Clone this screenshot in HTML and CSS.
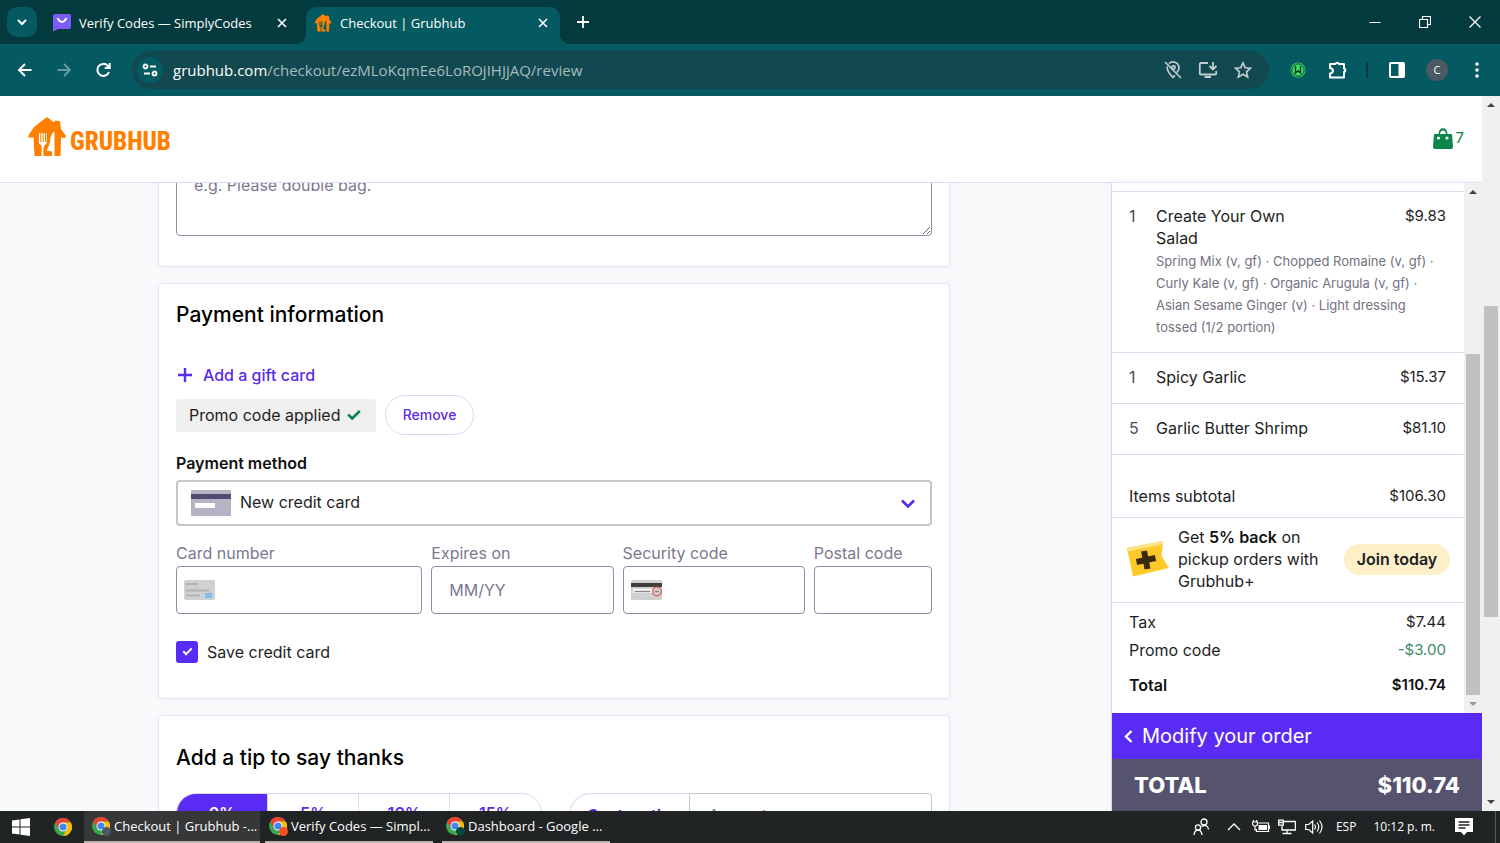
FILE: index.html
```
<!DOCTYPE html>
<html lang="en">
<head>
<meta charset="utf-8">
<title>Checkout | Grubhub</title>
<link rel="stylesheet" href="styles.css">
</head>
<body>
<svg class="defs" aria-hidden="true">
  <symbol id="house" viewBox="0 0 38 40">
    <path fill="#ff8000" d="M19 0 26 5.500 27 3.500 32 4 33 12 38 19 37 21 33 20.500 32.500 39H6.500L5.500 20.500 0 20.500 1 17.500 6 10Z"/>
    <path class="cutout" d="M11 16h1.300v9h1V16h1.400v9h1V16h1.300v9h1v-9h.6v10.500L16 29l-.8 5 .5 6h-2.200l.2-11L11 26.500ZM26.500 14v25.500h-2.500V34.500L18.500 33.500Q22 28 22.500 21 23 17 26.500 14Z"/>
  </symbol>
  <symbol id="chrome" viewBox="0 0 18 18">
    <circle cx="9" cy="9" r="9" fill="#34a853"/>
    <path fill="#ea4335" d="M1.200 4.500A9 9 0 0 1 16.800 4.500H9A4.500 4.500 0 0 0 5 7Z"/>
    <path fill="#ea4335" d="M1.200 4.500 5.100 11.200 9 9 9 4.500Z"/>
    <path fill="#fbbc04" d="M16.800 4.500A9 9 0 0 1 9 18L12.900 11.200 9 9V4.500Z"/>
    <circle cx="9" cy="9" r="4.500" fill="#fff"/><circle cx="9" cy="9" r="3.600" fill="#4285f4"/>
  </symbol>
  <symbol id="cross" viewBox="0 0 10 10"><path d="m1 1 8 8M9 1 1 9" fill="none" stroke="#fff" stroke-width="1.600"/></symbol>
</svg>

<header class="tabs">
  <button class="tab-search" aria-label="Search tabs"><svg width="10" height="7" viewBox="0 0 10 7"><path d="m1 1 4 4 4-4" fill="none" stroke="#fff" stroke-width="2"/></svg></button>
  <div class="tab">
    <svg width="18" height="18" viewBox="0 0 18 18"><path fill="#7c5cf5" d="M2 0h14a2 2 0 0 1 2 2v11a2 2 0 0 1-2 2H5l-5 2.500V2A2 2 0 0 1 2 0Z"/><path d="M5 5q4 6 8 0" fill="none" stroke="#fff" stroke-width="2.200" stroke-linecap="round"/></svg>
    <span class="tab-title">Verify Codes — SimplyCodes</span>
    <button class="tab-close" aria-label="Close tab"><svg width="10" height="10"><use href="#cross"/></svg></button>
  </div>
  <div class="tab active">
    <svg width="18" height="18"><use href="#house"/></svg>
    <span class="tab-title">Checkout | Grubhub</span>
    <button class="tab-close" aria-label="Close tab"><svg width="10" height="10"><use href="#cross"/></svg></button>
  </div>
  <button class="new-tab" aria-label="New tab"><svg width="12" height="12" viewBox="0 0 12 12"><path d="M6 0v12M0 6h12" stroke="#fff" stroke-width="1.800"/></svg></button>
  <div class="window-buttons">
    <button aria-label="Minimize"><svg width="12" height="12" viewBox="0 0 12 12"><path d="M.5 6.500h11" stroke="#fff"/></svg></button>
    <button aria-label="Restore"><svg width="12" height="12" viewBox="0 0 12 12"><path d="M.5 3.500h8v8h-8zM3.500 3V.5h8v8H9" fill="none" stroke="#fff" stroke-width="1.200"/></svg></button>
    <button aria-label="Close"><svg width="12" height="12" viewBox="0 0 12 12"><path d="m.5.5 11 11m0-11-11 11" stroke="#fff" stroke-width="1.200"/></svg></button>
  </div>
</header>

<nav class="toolbar">
  <button aria-label="Back"><svg width="20" height="20" viewBox="0 0 20 20"><path d="M16.500 10H4.500m5.500-6-6 6 6 6" fill="none" stroke="#fff" stroke-width="2"/></svg></button>
  <button aria-label="Forward"><svg width="20" height="20" viewBox="0 0 20 20"><path d="M3.500 10h12M10 4l6 6-6 6" fill="none" stroke="#6a9ea2" stroke-width="1.800"/></svg></button>
  <button aria-label="Reload"><svg width="20" height="20" viewBox="0 0 20 20"><path d="M16 12a6 6 0 1 1-1.300-6.300L16.500 7.500M16.700 3v5h-5" fill="none" stroke="#fff" stroke-width="2"/></svg></button>
  <div class="omnibox">
    <button class="site-info" aria-label="Site information"><svg width="16" height="14" viewBox="0 0 16 14"><g fill="none" stroke="#fff" stroke-width="1.800"><circle cx="3.500" cy="3.500" r="2"/><path d="M8 3.500h6M2 10.500h6"/><circle cx="12.500" cy="10.500" r="2"/></g></svg></button>
    <p class="url"><span>grubhub.com</span>/checkout/ezMLoKqmEe6LoROjIHJjAQ/review</p>
    <div class="omni-actions">
      <button aria-label="Location blocked"><svg width="18" height="20" viewBox="0 0 18 20"><g fill="none" stroke="#c3cdd0" stroke-width="1.700"><path d="M5 3.500A6 6 0 0 1 15 8q0 2-2 4.500M3.300 6.500C2.500 10.500 6 14.500 9 17.500l2-2.200M1 2l16 16"/><circle cx="9.500" cy="7.500" r="1.600"/></g></svg></button>
      <button aria-label="Install app"><svg width="20" height="18" viewBox="0 0 20 18"><path d="M10 2H2.800a1 1 0 0 0-1 1v9.500a1 1 0 0 0 1 1h14.400a1 1 0 0 0 1-1V10M6.500 16h6.500M15 1v7M11.500 5 15 8.500 18.500 5" fill="none" stroke="#c3cdd0" stroke-width="1.800"/></svg></button>
      <button aria-label="Bookmark"><svg width="18" height="18" viewBox="0 0 18 18"><path d="m9 1.800 2.200 4.900 5.300.5-4 3.600 1.200 5.200L9 13.200 4.300 16l1.200-5.200-4-3.600 5.300-.5Z" fill="none" stroke="#c3cdd0" stroke-width="1.600"/></svg></button>
    </div>
  </div>
  <button aria-label="Coupon extension"><svg width="16" height="16" viewBox="0 0 16 16"><circle cx="8" cy="8" r="7.500" fill="#3ee06d"/><circle cx="8" cy="8" r="6.200" fill="none" stroke="#08331d"/><path d="M5.500 4v7L8 9l2.500 2V4" fill="none" stroke="#08331d" stroke-width="1.400"/></svg></button>
  <button aria-label="Extensions"><svg width="20" height="20" viewBox="0 0 20 20"><path d="M4 4h4.500a1.800 1.800 0 0 1 3.400 0H17v4.500a1.800 1.800 0 0 1 0 3.500V17.500H3V13.500q3-.5 3-2.700T3 8V4Z" fill="none" stroke="#fff" stroke-width="2" stroke-linejoin="round"/></svg></button>
  <span class="toolbar-rule"></span>
  <button aria-label="Side panel"><svg width="16" height="16" viewBox="0 0 16 16"><rect x="1" y="1" width="14" height="14" rx="1" fill="none" stroke="#fff" stroke-width="2"/><path fill="#fff" d="M9.500 1H15v14H9.500z"/></svg></button>
  <button class="avatar" aria-label="Profile">C</button>
  <button aria-label="Menu"><svg width="4" height="16" viewBox="0 0 4 16"><g fill="#fff"><circle cx="2" cy="2" r="1.800"/><circle cx="2" cy="8" r="1.800"/><circle cx="2" cy="14" r="1.800"/></g></svg></button>
</nav>

<div class="viewport">
  <div class="site">
    <header class="site-header">
      <a class="logo" href="#" aria-label="Grubhub home"><svg width="38" height="40"><use href="#house"/></svg><span>GRUBHUB</span></a>
      <button class="bag"><svg width="20" height="21" viewBox="0 0 20 21"><path fill="#0c8549" d="M2 6h3.500Q6 .3 10 .3T14.500 6H18q1 0 1.100 1L20 19q0 2-2 2H2q-2 0-2-2L.9 7Q1 6 2 6Zm5 0h6q-.3-3.500-3-3.500T7 6Z"/><circle cx="5.500" cy="10" r="1.600" fill="#fff"/><circle cx="14" cy="10" r="1.600" fill="#fff"/></svg>7</button>
    </header>
    <div class="site-body">
      <main class="content">
        <section class="card note-card">
          <textarea class="note" aria-label="Order instructions" placeholder="e.g. Please double bag."></textarea>
        </section>

        <section class="card payment">
          <h2>Payment information</h2>
          <button class="gift"><svg width="14" height="14" viewBox="0 0 14 14"><path d="M7 0v14M0 7h14" stroke="#5a2be8" stroke-width="2.400"/></svg>Add a gift card</button>
          <div class="promo">
            <span class="promo-tag">Promo code applied <svg width="14" height="10" viewBox="0 0 14 10"><path d="m1.200 4.500 4 4L12.800 1" fill="none" stroke="#0c8549" stroke-width="2.600"/></svg></span>
            <button class="remove">Remove</button>
          </div>
          <label class="method-label" for="method">Payment method</label>
          <div class="method">
            <select id="method"><option>New credit card</option></select>
            <svg class="method-card" width="40" height="26" viewBox="0 0 40 26"><rect width="40" height="26" rx="1" fill="#b6b4c4"/><path fill="#524a70" d="M0 4h40v5H0z"/><path fill="#fff" d="M4 13h20v5H4z"/></svg>
            <svg class="method-arrow" width="14" height="9" viewBox="0 0 14 9"><path d="m1 1.500 6 6 6-6" fill="none" stroke="#5a2be8" stroke-width="2.600"/></svg>
          </div>
          <div class="fields">
            <div class="field"><label for="number">Card number</label><div class="box"><svg width="31" height="20" viewBox="0 0 31 20"><rect width="31" height="20" rx="2" fill="#d0d0d0"/><path d="M2 4h12M2 10.500h23M2 15.500h14" stroke="#b2b2b2" stroke-width="2"/><path fill="#82bdee" d="M21 13h7v5h-7z"/></svg><input id="number" type="text"></div></div>
            <div class="field"><label for="expires">Expires on</label><div class="box"><input id="expires" type="text" placeholder="MM/YY"></div></div>
            <div class="field"><label for="security">Security code</label><div class="box"><svg width="31" height="20" viewBox="0 0 31 20"><rect width="31" height="20" rx="1.500" fill="#d0d0d0"/><path fill="#3e3e3e" d="M0 3h31v4H0z"/><path fill="#fff" d="M2 9h19v4H2z"/><path d="M3.500 11.500h16M24 11.500h4" stroke="#8a8a8a" stroke-width="1.500"/><circle cx="26" cy="11.500" r="4.300" fill="none" stroke="#e25a55" stroke-width="1.300"/></svg><input id="security" type="text"></div></div>
            <div class="field"><label for="postal">Postal code</label><div class="box"><input id="postal" type="text"></div></div>
          </div>
          <label class="save"><input type="checkbox" checked>Save credit card</label>
        </section>

        <section class="card tip">
          <h2>Add a tip to say thanks</h2>
          <div class="tip-row">
            <div class="tip-group"><button class="selected">0%</button><button>5%</button><button>10%</button><button>15%</button></div>
            <div class="custom"><button>Custom tip</button><input type="text" aria-label="Tip amount" placeholder="Amount"></div>
          </div>
        </section>
      </main>

      <aside class="order">
        <div class="order-scroll">
          <div class="order-list">
            <div class="item first"><span class="qty">1</span><p>Create Your Own Salad</p><span class="price">$9.83</span><p class="options">Spring Mix (v, gf) · Chopped Romaine (v, gf) · Curly Kale (v, gf) · Organic Arugula (v, gf) · Asian Sesame Ginger (v) · Light dressing tossed (1/2 portion)</p></div>
            <div class="item"><span class="qty">1</span><p>Spicy Garlic</p><span class="price">$15.37</span></div>
            <div class="item"><span class="qty">5</span><p>Garlic Butter Shrimp</p><span class="price">$81.10</span></div>
            <div class="line subtotal"><span>Items subtotal</span><span class="price">$106.30</span></div>
            <div class="plus">
              <svg width="42" height="36" viewBox="0 0 42 36"><path fill="#ffca28" d="M0 7 36 0l-1.500 15L42 27 6 35.500Z"/><path d="m1 9 35-7.500" stroke="#ffe58a" stroke-width="3"/><path d="m17 10 3.500 18M9.500 21l19-4" stroke="#3b2a0b" stroke-width="6"/></svg>
              <p>Get <b>5% back</b> on pickup orders with Grubhub+</p>
              <button>Join today</button>
            </div>
            <div class="totals">
              <div class="line"><span>Tax</span><span class="price">$7.44</span></div>
              <div class="line"><span>Promo code</span><span class="price discount">-$3.00</span></div>
              <div class="line grand"><span>Total</span><span class="price">$110.74</span></div>
            </div>
          </div>
          <div class="track inner-track"><span class="arrow up"></span><span class="space-before"></span><span class="thumb"></span><span class="arrow down faded"></span></div>
        </div>
        <button class="modify"><svg width="9" height="13" viewBox="0 0 9 13"><path d="M7.500 1 2 6.500 7.500 12" fill="none" stroke="#fff" stroke-width="2.400"/></svg>Modify your order</button>
        <div class="order-total"><span>TOTAL</span><span>$110.74</span></div>
      </aside>
    </div>
  </div>
  <div class="track page-track"><span class="arrow up"></span><span class="space-before"></span><span class="thumb"></span><span class="space-after"></span><span class="arrow down"></span></div>
</div>

<footer class="taskbar">
  <button class="start" aria-label="Start"><svg width="18" height="18" viewBox="0 0 18 18"><path fill="#fff" d="M0 2.500 7.500 1.400v7.100H0zM8.500 1.300 18 0v8.500H8.500zM0 9.500h7.500v7.100L0 15.500zM8.500 9.500H18V18L8.500 16.700z"/></svg></button>
  <button class="launcher" aria-label="Google Chrome"><svg width="18" height="18"><use href="#chrome"/></svg></button>
  <button class="task current"><span class="task-icon gray"><svg width="18" height="18"><use href="#chrome"/></svg></span>Checkout | Grubhub -...</button>
  <button class="task"><span class="task-icon orange"><svg width="18" height="18"><use href="#chrome"/></svg></span>Verify Codes — Simpl...</button>
  <button class="task"><span class="task-icon green"><svg width="18" height="18"><use href="#chrome"/></svg></span>Dashboard - Google ...</button>
  <div class="tray">
    <svg class="people" width="16" height="18" viewBox="0 0 16 18"><g fill="none" stroke="#fff" stroke-width="1.300"><circle cx="11" cy="4" r="3"/><path d="M8.500 8.500q6-3 7 3"/><circle cx="5" cy="9.500" r="2.600"/><path d="M1 17q.5-5 4-5t4 5"/></g></svg>
    <svg class="chev" width="14" height="8" viewBox="0 0 14 8"><path d="m1 7 6-6 6 6" fill="none" stroke="#fff" stroke-width="1.400"/></svg>
    <svg class="battery" width="18" height="14" viewBox="0 0 18 14"><g fill="none" stroke="#fff" stroke-width="1.200"><path d="M6.500 3H16.500v8.500H4.500V9M1.500 0v2M4.500 0v2M.5 2h5v2.500L4 6H2L.5 4.500ZM3 6v4h1.500"/></g><path fill="#fff" d="M6.500 5h8.500v5H6.500zM17 5.500h1V9h-1z"/></svg>
    <svg class="network" width="18" height="16" viewBox="0 0 18 16"><path d="M5.500 2.500h11.900v8.500H4V7M4.500 14.500h9M9 11v3.500M.7 1.200h4.600v5H.7zM.7 3.500h4.600" fill="none" stroke="#fff" stroke-width="1.300"/></svg>
    <svg class="sound" width="18" height="16" viewBox="0 0 18 16"><path d="M.7 5.500h3l4-3.500v12l-4-3.500h-3ZM9.500 5.500q2 2.500 0 5M12 3.500q3.500 4.500 0 9M14.500 1.500q5 6.500 0 13" fill="none" stroke="#fff" stroke-width="1.200"/></svg>
    <span class="lang">ESP</span>
    <span class="clock">10:12 p. m.</span>
    <svg class="notes" width="18" height="18" viewBox="0 0 18 18"><path fill="#fff" d="M0 0h18v14h-6l-3 3.500L6 14H0z"/><path d="M3.500 4h11M3.500 7h11M3.500 10h7" stroke="#222526" stroke-width="1.400"/></svg>
    <span class="desktop-edge"></span>
  </div>
</footer>
</body>
</html>
```
FILE: styles.css
```
*, *::before, *::after { box-sizing: border-box; }
body {
  margin: 0;
  height: 100vh;
  display: flex;
  flex-direction: column;
  overflow: hidden;
  background: #fff;
  color: #1e1e24;
  font: 16px/22px Inter, "Liberation Sans", sans-serif;
}
button { border: 0; background: none; padding: 0; margin: 0; font: inherit; color: inherit; cursor: pointer; }
h2, p { margin: 0; }
svg { display: block; flex: none; }
.defs { position: absolute; width: 0; height: 0; }
.cutout { fill: currentColor; }

/* Tab strip */
.tabs, .toolbar, .taskbar { font-family: "Open Sans", "Noto Sans", sans-serif; flex: none; color: #fff; }
.tabs { height: 44px; display: flex; background: #033a3d; }
.tab-search { width: 30px; height: 30px; margin: 7px 6px 0 7px; border-radius: 10px; background: #045a60; display: grid; place-items: center; }
.tab { width: 263px; display: flex; align-items: center; gap: 8px; padding: 2px 17px 0 10px; font-size: 13px; }
.tab-title { flex: 1; white-space: nowrap; }
.tab-close { width: 14px; height: 14px; display: grid; place-items: center; }
.tab.active { position: relative; width: 254px; margin-top: 7px; padding: 0 10px 5px 8px; background: #045a60; border-radius: 10px 10px 0 0; color: #045a60; }
.tab.active::before, .tab.active::after { content: ""; position: absolute; bottom: 0; width: 10px; height: 10px; }
.tab.active::before { right: 100%; background: radial-gradient(circle at 0 0, #033a3d 10px, #045a60 10px); }
.tab.active::after { left: 100%; background: radial-gradient(circle at 100% 0, #033a3d 10px, #045a60 10px); }
.tab.active .tab-title { color: #fff; }
.new-tab { width: 45px; display: grid; place-items: center; }
.window-buttons { margin-left: auto; display: flex; }
.window-buttons button { width: 50px; display: grid; place-items: center; }

/* Toolbar */
.toolbar { height: 52px; display: flex; align-items: center; gap: 19px; padding: 0 13px 0 15px; background: #045a60; }
.toolbar > button { width: 20px; height: 20px; flex: none; display: grid; place-items: center; }
.omnibox { flex: 1; height: 38px; border-radius: 19px; background: #124850; display: flex; align-items: center; gap: 10px; padding: 0 17px 0 5px; }
.site-info { width: 26px; height: 26px; border-radius: 13px; background: #045a60; display: grid; place-items: center; }
.url { flex: 1; font-size: 15px; color: #a6bcbf; }
.url span { color: #fff; }
.omni-actions { display: flex; gap: 16px; align-items: center; }
.toolbar-rule { width: 2px; height: 16px; background: #033a3d; }
.toolbar > .avatar { width: 22px; height: 22px; border-radius: 11px; background: #4c5963; font-size: 11px; }

/* Page */
.viewport { flex: 1; min-height: 0; display: flex; }
.site { flex: 1; min-width: 0; display: flex; flex-direction: column; }
.site-header { height: 87px; flex: none; display: flex; align-items: center; justify-content: space-between; padding: 0 18px 4px 28px; border-bottom: 1px solid #dddaf0; }
.logo { display: flex; align-items: center; gap: 4px; color: #fff; text-decoration: none; }
.logo span { color: #ff8000; font: 800 25px/30px "Roboto Condensed", Roboto, sans-serif; padding-top: 9px; }
.bag { display: flex; align-items: center; gap: 3px; padding-top: 2px; color: #0c8549; font-size: 15px; }
.site-body { flex: 1; min-height: 0; display: flex; background: #fafafc; }
.content { flex: 1; min-width: 0; padding: 0 161px 0 158px; display: flex; flex-direction: column; gap: 16px; overflow: hidden; }
.card { flex: none; background: #fff; border: 1px solid #e6e4f2; border-radius: 4px; padding: 17px; box-shadow: 0 0 6px #f0effa; }
.note-card { margin-top: -36px; padding-bottom: 30px; }
.note { display: block; width: 100%; height: 71px; border: 1px solid #8f8ca3; border-radius: 4px; background: #fff; padding: 8px 17px; font: inherit; resize: vertical; outline: 0; }
::placeholder { color: #7b788f; opacity: 1; }
h2 { font-size: 21px; line-height: 28px; font-weight: 500; color: #000; }

.payment { padding-bottom: 35px; }
.gift { display: flex; align-items: center; gap: 11px; margin: 35px 0 9px 2px; color: #5a2be8; font-weight: 500; }
.promo { display: flex; align-items: center; gap: 9px; }
.promo-tag { display: flex; align-items: center; gap: 6px; width: 200px; height: 33px; padding: 0 13px; background: #efefef; border-radius: 3px; white-space: nowrap; }
.remove { width: 89px; height: 40px; border: 1px solid #dcd6f2; border-radius: 20px; color: #5a2be8; font-size: 14px; font-weight: 500; }
.method-label { display: block; margin: 17px 0 6px; font-weight: 600; color: #111; }
.method { position: relative; }
.method select { display: block; width: 100%; height: 46px; appearance: none; border: 2px solid #c6c6c6; border-radius: 4px; background: #fff; padding: 0 40px 3px 62px; font: inherit; color: #1e1e24; }
.method-card { position: absolute; left: 15px; top: 10px; pointer-events: none; }
.method-arrow { position: absolute; right: 17px; top: 19px; pointer-events: none; }
.fields { display: grid; grid-template-columns: minmax(0, 246fr) minmax(0, 182fr) minmax(0, 182fr) minmax(0, 118fr); gap: 9px; margin-top: 16px; }
.field label { display: block; margin-bottom: 2px; color: #7b788f; }
.box { display: flex; align-items: center; height: 48px; border: 1px solid #8f8ca3; border-radius: 4px; padding-left: 7px; background: #fff; }
.box input { flex: 1; min-width: 0; height: 44px; border: 0; background: none; padding: 0 10px; font: inherit; outline: 0; }
.save { display: flex; align-items: center; gap: 9px; margin-top: 27px; }
.save input { appearance: none; width: 22px; height: 22px; margin: 0; border-radius: 3px; background: #5a2bf5; display: grid; place-items: center; }
.save input::before { content: ""; width: 9px; height: 5px; border: solid #fff; border-width: 0 0 2px 2px; transform: rotate(-45deg); margin-bottom: 3px; }

.tip { padding-top: 28px; }
.tip-row { display: flex; align-items: flex-start; gap: 27px; margin-top: 21px; font-weight: 600; color: #5a2be8; }
.tip-group { flex: 364; display: flex; border: 1px solid #dcd6f2; border-radius: 20px; overflow: hidden; }
.tip-group button { flex: 1; height: 38px; border-left: 1px solid #dcd6f2; }
.tip-group .selected { background: #5a2bf5; color: #fff; border: 0; }
.custom { flex: 364; min-width: 0; height: 44px; display: flex; }
.custom button { width: 120px; flex: none; border: 1px solid #dcd6f2; border-right: 0; border-radius: 22px 0 0 22px; }
.custom input { flex: 1; min-width: 0; border: 1px solid #c6c6c6; border-radius: 0 4px 4px 0; padding: 0 19px; font: 16px/22px Inter, sans-serif; outline: 0; }

/* Order summary */
.order { width: 371px; flex: none; display: flex; flex-direction: column; border-left: 1px solid #dddaf0; background: #fff; box-shadow: 0 0 8px #efedf8; }
.order-scroll { flex: 1; min-height: 0; display: flex; overflow: hidden; }
.order-list { flex: 1; padding-top: 8px; }
.item { display: grid; grid-template-columns: 27px 152px 1fr; padding: 13px 18px 15px 17px; border-bottom: 1px solid #dddaf0; }
.price { text-align: right; font-size: 15px; }
.item.first { border-top: 1px solid #dddaf0; padding-bottom: 14px; }
.qty { color: #4b4b55; }
.options { grid-column: 2 / 4; padding-top: 1px; font-size: 13px; color: #74717f; }
.line { display: flex; justify-content: space-between; padding: 0 18px 0 17px; }
.subtotal { padding: 30px 18px 10px 17px; border-bottom: 1px solid #dddaf0; }
.plus { display: flex; align-items: center; gap: 9px; padding: 8px 14px 10px 15px; border-bottom: 1px solid #dddaf0; }
.plus p { flex: 1; padding-right: 16px; }
.plus b { font-weight: 600; color: #111; }
.plus button { width: 106px; height: 31px; border-radius: 16px; background: #fdf0c8; color: #1e1e24; font-weight: 600; }
.totals { padding-top: 8px; display: grid; gap: 6px; }
.discount { color: #3f8a66; }
.grand { margin-top: 7px; font-weight: 600; color: #111; }
.modify { height: 46px; flex: none; display: flex; align-items: center; gap: 9px; padding-left: 12px; background: #5a2bf5; color: #fff; font-size: 20px; }
.order-total { height: 52px; flex: none; display: flex; align-items: center; justify-content: space-between; padding: 0 22px; background: #55536e; color: #fff; font-size: 22px; font-weight: 800; }

/* Scrollbars */
.track { width: 18px; flex: none; display: flex; flex-direction: column; align-items: center; background: #f0f0f0; }
.arrow { height: 18px; display: grid; place-items: center; }
.arrow::before { content: ""; border: 4px solid transparent; }
.arrow.up::before { border-top: 0; border-bottom-color: #444; }
.arrow.down::before { border-bottom: 0; border-top-color: #444; }
.arrow.faded::before { border-top-color: #999; }
.thumb { width: 14px; background: #c1c1c1; }
.page-track .space-before { flex: 191; }
.page-track .thumb { flex: 311; }
.page-track .space-after { flex: 175; }
.inner-track .space-before { flex: 153; }
.inner-track .thumb { flex: 341; }

/* Taskbar */
.taskbar { height: 32px; display: flex; background: #212425; font-size: 13px; }
.start { width: 41px; display: grid; place-items: center; }
.launcher { width: 43px; display: grid; place-items: center; }
.task { width: 168px; margin-right: 9px; display: flex; align-items: center; gap: 4px; padding-left: 4px; border-bottom: 2px solid #b9b2ae; white-space: nowrap; }
.task.current { width: 176px; margin-right: 5px; padding-left: 8px; background: #363738; }
.task-icon { position: relative; }
.task-icon::after { content: ""; position: absolute; right: -1px; bottom: -1px; width: 9px; height: 9px; border-radius: 5px; }
.gray::after { background: #4c5963; }
.orange::after { background: #f4511e; }
.green::after { background: #034a3d; }
.tray { margin-left: auto; display: flex; align-items: center; }
.people { margin-right: 18px; }
.chev { margin-right: 11px; }
.sound { margin-right: 13px; }
.battery { margin-right: 8px; }
.network { margin-right: 9px; }
.lang { margin-right: 17px; font-size: 12px; }
.clock { margin-right: 20px; font-size: 12px; }
.notes { margin-right: 22px; }
.desktop-edge { width: 1px; height: 32px; margin-right: 4px; background: #55595a; }
```
